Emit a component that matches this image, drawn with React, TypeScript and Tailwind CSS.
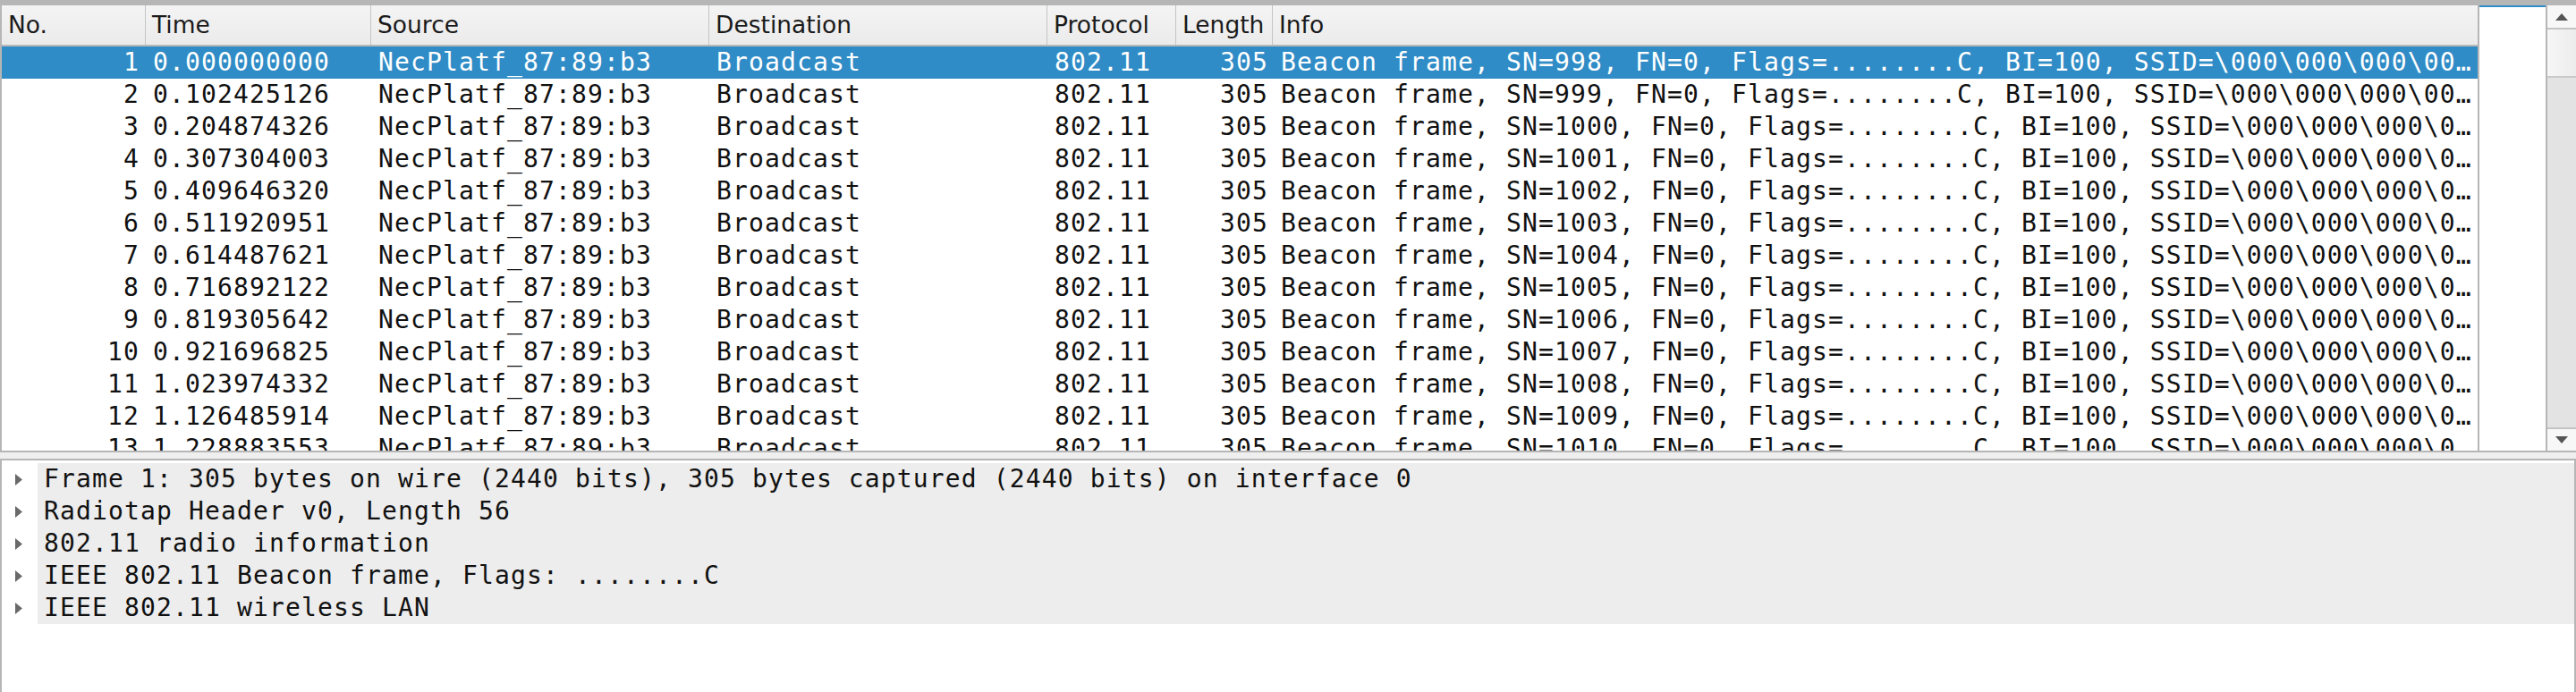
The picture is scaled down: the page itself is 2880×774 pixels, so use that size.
import React from "react";

const times = [
  "0.000000000",
  "0.102425126",
  "0.204874326",
  "0.307304003",
  "0.409646320",
  "0.511920951",
  "0.614487621",
  "0.716892122",
  "0.819305642",
  "0.921696825",
  "1.023974332",
  "1.126485914",
  "1.228883553",
];

const rows = times.map((t, i) => ({
  no: i + 1,
  time: t,
  src: "NecPlatf_87:89:b3",
  dst: "Broadcast",
  proto: "802.11",
  len: "305",
  info: `Beacon frame, SN=${998 + i}, FN=0, Flags=........C, BI=100, SSID=\\000\\000\\000\\000\\000\\000\\000\\000\\000\\000\\000`,
}));

const details = [
  "Frame 1: 305 bytes on wire (2440 bits), 305 bytes captured (2440 bits) on interface 0",
  "Radiotap Header v0, Length 56",
  "802.11 radio information",
  "IEEE 802.11 Beacon frame, Flags: ........C",
  "IEEE 802.11 wireless LAN",
];

const mono = "font-['DejaVu_Sans_Mono',monospace] text-[28px] tracking-[1.14px]";

function HeaderCell({ label, w, last }: { label: string; w: string; last?: boolean }) {
  return (
    <div
      className={`${w} shrink-0 h-full flex items-center pl-[7px] ${last ? "" : "border-r border-[#c4c4c4]"} overflow-hidden whitespace-nowrap`}
    >
      {label}
    </div>
  );
}

export default function App() {
  return (
    <div className="w-[2880px] h-[774px] bg-white flex flex-col overflow-hidden text-black">
      {/* Packet list pane */}
      <div className="h-[506px] shrink-0 flex border-l-2 border-t-[6px] border-b-2 border-[#b6b6b6]">
        <div className="w-[2768px] shrink-0 flex flex-col overflow-hidden">
          <div className="h-[46px] shrink-0 flex border-b-2 border-[#b9b9b9] bg-gradient-to-b from-[#f4f4f4] to-[#ebebeb] font-['DejaVu_Sans',sans-serif] text-[26.5px] text-[#1a1a1a]">
            <HeaderCell label="No." w="w-[161px]" />
            <HeaderCell label="Time" w="w-[252px]" />
            <HeaderCell label="Source" w="w-[378px]" />
            <HeaderCell label="Destination" w="w-[378px]" />
            <HeaderCell label="Protocol" w="w-[144px]" />
            <HeaderCell label="Length" w="w-[108px]" />
            <HeaderCell label="Info" w="flex-1" last />
          </div>
          <div className={`flex-1 overflow-hidden ${mono}`}>
            {rows.map((r) => (
              <div
                key={r.no}
                className={`h-[36px] flex items-center whitespace-nowrap ${r.no === 1 ? "bg-[#308cc6] text-white" : "text-[#111]"}`}
              >
                <div className="w-[161px] shrink-0 text-right pr-[7px]">{r.no}</div>
                <div className="w-[252px] shrink-0 pl-[8px]">{r.time}</div>
                <div className="w-[378px] shrink-0 pl-[8px]">{r.src}</div>
                <div className="w-[378px] shrink-0 pl-[8px]">{r.dst}</div>
                <div className="w-[144px] shrink-0 pl-[8px]">{r.proto}</div>
                <div className="w-[108px] shrink-0 text-right pr-[5px]">{r.len}</div>
                <div className="flex-1 min-w-0 pl-[9px] pr-[6px] overflow-hidden text-ellipsis">{r.info}</div>
              </div>
            ))}
          </div>
        </div>
        {/* intelligent scrollbar minimap */}
        <div className="w-[78px] shrink-0 border-x-2 border-[#b6b6b6] bg-white flex flex-col">
          <div className="h-[2px] bg-[#308cc6]" />
        </div>
        {/* scrollbar */}
        <div className="flex-1 flex flex-col bg-[#e3e3e3]">
          <div className="h-[27px] shrink-0 bg-[#f7f7f7] border-b-2 border-[#c4c4c4] flex items-center justify-center">
            <svg width="14" height="8" viewBox="0 0 14 8">
              <polygon points="7,0 14,8 0,8" fill="#555" />
            </svg>
          </div>
          <div className="h-[54px] shrink-0 bg-gradient-to-r from-[#f6f6f6] to-[#ececec] border-b-2 border-[#c9c9c9]" />
          <div className="flex-1" />
          <div className="h-[26px] shrink-0 bg-[#f7f7f7] border-t-2 border-[#c4c4c4] flex items-center justify-center">
            <svg width="14" height="8" viewBox="0 0 14 8">
              <polygon points="0,0 14,0 7,8" fill="#555" />
            </svg>
          </div>
        </div>
      </div>
      {/* splitter */}
      <div className="h-[7px] shrink-0 bg-[#efefef]" />
      {/* Details pane */}
      <div className="flex-1 border-l-2 border-t-2 border-r-2 border-[#b6b6b6] pt-[3px]">
        {details.map((d, i) => (
          <div key={i} className="h-[36px] flex items-center">
            <div className="w-[40px] shrink-0 flex items-center pl-[15px]">
              <svg width="8" height="13" viewBox="0 0 8 13">
                <polygon points="0,0 8,6.5 0,13" fill="#6a6a6a" />
              </svg>
            </div>
            <div className={`flex-1 h-full flex items-center bg-[#ededed] pl-[7px] whitespace-nowrap text-[#111] ${mono}`}>
              {d}
            </div>
          </div>
        ))}
      </div>
    </div>
  );
}
